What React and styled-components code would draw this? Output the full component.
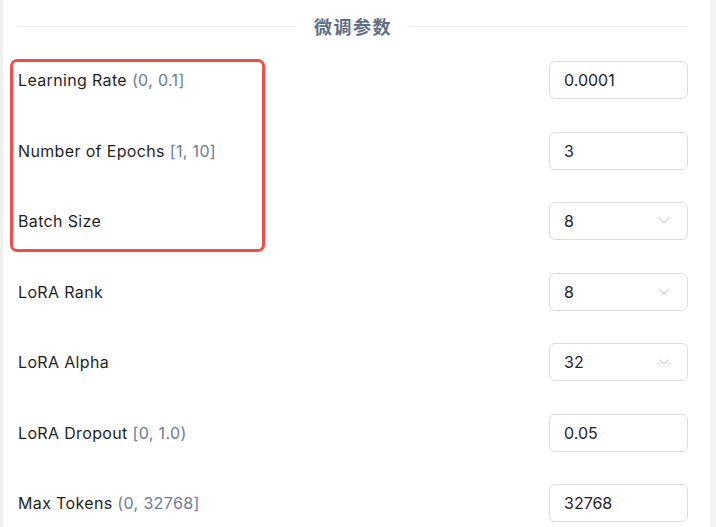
import React from 'react';
import styled, { createGlobalStyle } from 'styled-components';

const GlobalStyle = createGlobalStyle`
  body {
    margin: 0;
    background: #ffffff;
    font-family: Inter, "Noto Sans CJK SC", Arial, sans-serif;
  }
`;

const params = [
  { label: 'Learning Rate', range: '(0, 0.1]', value: '0.0001', kind: 'input' },
  { label: 'Number of Epochs', range: '[1, 10]', value: '3', kind: 'input' },
  { label: 'Batch Size', value: '8', kind: 'select' },
  { label: 'LoRA Rank', value: '8', kind: 'select' },
  { label: 'LoRA Alpha', value: '32', kind: 'select' },
  { label: 'LoRA Dropout', range: '[0, 1.0)', value: '0.05', kind: 'input' },
  { label: 'Max Tokens', range: '(0, 32768]', value: '32768', kind: 'input' },
];

const Chevron = () => (
  <svg width="10" height="6" viewBox="0 0 10 6" fill="none">
    <path d="M0.5 0.5 L5 5 L9.5 0.5" stroke="#c4c4c4" strokeWidth="1" />
  </svg>
);

const ParamRow = ({ item }) => (
  <Row>
    <Label>
      {item.label}
      {item.range && <Range> {item.range}</Range>}
    </Label>
    {item.kind === 'select' ? (
      <SelectBox>
        <span>{item.value}</span>
        <Chevron />
      </SelectBox>
    ) : (
      <NumberInput type="text" defaultValue={item.value} />
    )}
  </Row>
);

const App = () => {
  const highlighted = params.slice(0, 3);
  const rest = params.slice(3);

  return (
    <>
      <GlobalStyle />
      <Page>
        <Content>
          {/* Section title */}
          <Divider>
            <Line />
            <Title>微调参数</Title>
            <Line />
          </Divider>

          <Rows>
            <Highlight>
              {highlighted.map(item => <ParamRow key={item.label} item={item} />)}
            </Highlight>
            {rest.map(item => <ParamRow key={item.label} item={item} />)}
          </Rows>
        </Content>
      </Page>
    </>
  );
};

//Component Styles
const Page = styled.div`
  width: 716px;
  height: 527px;
  box-sizing: border-box;
  border-left: 3px solid #eeeeee;
  border-right: 6px solid #f4f4f5;
  overflow: hidden;
`;

const Content = styled.div`
  padding: 13px 22px 0 15px;
`;

const Divider = styled.div`
  display: flex;
  align-items: center;
  gap: 18px;
  height: 26px;
`;

const Line = styled.div`
  flex: 1;
  height: 1px;
  background: #ececec;
`;

const Title = styled.div`
  font-size: 18px;
  font-weight: 700;
  color: #5f6e84;
  letter-spacing: 1.5px;
  font-family: "Noto Sans CJK SC", sans-serif;
`;

const Rows = styled.div`
  display: flex;
  flex-direction: column;
  gap: 32.5px;
  margin-top: 22px;
`;

const Highlight = styled.div`
  position: relative;
  display: flex;
  flex-direction: column;
  gap: 32.5px;

  &::before {
    content: '';
    position: absolute;
    top: -2px;
    left: -8px;
    width: 255px;
    bottom: -12px;
    box-sizing: border-box;
    border: 3px solid #f24c4c;
    border-radius: 7px;
    pointer-events: none;
  }
`;

const Row = styled.div`
  display: flex;
  justify-content: space-between;
  align-items: center;
  height: 38px;
`;

const Label = styled.div`
  font-size: 16px;
  letter-spacing: 0.35px;
  color: #1f1f1f;
`;

const Range = styled.span`
  color: #6b7c95;
`;

const fieldBox = `
  box-sizing: border-box;
  width: 139px;
  height: 38px;
  border: 1px solid #dddddd;
  border-radius: 6px;
  padding: 0 14px;
  font-size: 16px;
  color: #1f1f1f;
  background: #ffffff;
  font-family: Inter, Arial, sans-serif;
`;

const NumberInput = styled.input`
  ${fieldBox}
  outline: none;
`;

const SelectBox = styled.div`
  ${fieldBox}
  display: flex;
  align-items: center;
  justify-content: space-between;
  padding-right: 18px;
`;

export default App;
